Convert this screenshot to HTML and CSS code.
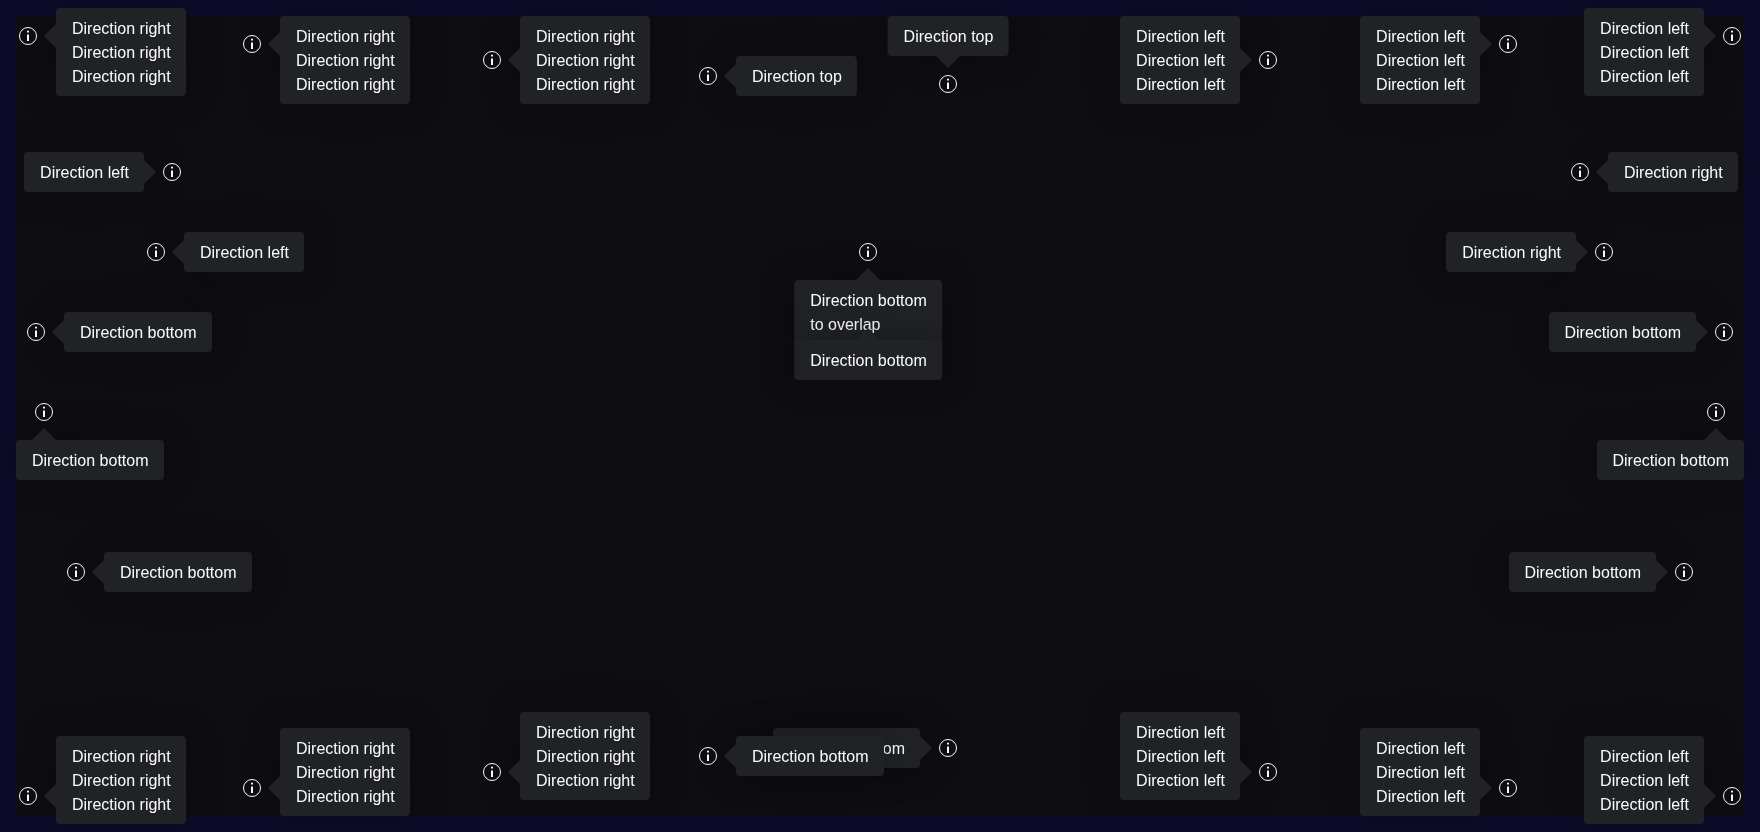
FILE: index.html
```
<!DOCTYPE html>
<html lang="en">
<head>
<meta charset="utf-8">
<title>Popover directions</title>
<link rel="stylesheet" href="styles.css">
</head>
<body>
<main class="frame" id="frame">
  <div class="stage"></div>
</main>
<script src="popovers.js"></script>
</body>
</html>
```
FILE: styles.css
```
* {
  box-sizing: border-box;
}

body {
  margin: 0;
  background: #0e0e12;
  color: #fbfcff;
  font: 16px/24px "Liberation Sans", Arial, sans-serif;
}

.frame {
  position: relative;
  display: flex;
  min-height: 100vh;
  padding: 16px;
  overflow: hidden;
  background: #0c0c2a;
}

.stage {
  flex: 1;
  background: #0e0e12;
}

/* A spot is one info button pinned on the free canvas */
.spot {
  position: absolute;
  width: 24px;
  height: 24px;
}

.info {
  display: block;
  width: 24px;
  height: 24px;
  padding: 0;
  border: 0;
  background: none;
  color: inherit;
  cursor: pointer;
}

.info svg {
  display: block;
}

.popover {
  position: absolute;
  inset: 0;
  z-index: 1;
  pointer-events: none;
  filter: drop-shadow(0 0 16px rgba(0, 0, 0, 0.3));
}

.popover::before {
  content: "";
  position: absolute;
  background: #212225;
}

.box {
  position: absolute;
  padding: 9px 15px 7px 16px;
  border-radius: 4px;
  background: #212225;
  white-space: pre;
}

.right::before {
  left: 28px;
  top: 0;
  width: 12px;
  height: 24px;
  clip-path: polygon(100% 0, 100% 100%, 0 50%);
}

.left::before {
  right: 28px;
  top: 0;
  width: 12px;
  height: 24px;
  clip-path: polygon(0 0, 100% 50%, 0 100%);
}

.top::before {
  bottom: 28px;
  left: 0;
  width: 24px;
  height: 12px;
  clip-path: polygon(0 0, 100% 0, 50% 100%);
}

.bottom::before {
  top: 28px;
  left: 0;
  width: 24px;
  height: 12px;
  clip-path: polygon(50% 0, 100% 100%, 0 100%);
}

.right .box {
  left: 40px;
}

.left .box {
  right: 40px;
}

.right .box,
.left .box {
  top: 50%;
  transform: translateY(-50%);
}

.top .box {
  bottom: 40px;
}

.bottom .box {
  top: 40px;
}

.top .box,
.bottom .box {
  left: 50%;
  transform: translateX(-50%);
}

/* Boxes pushed back inside the edge of the stage */
.popover.shift-down .box {
  top: -16px;
  transform: none;
}

.popover.shift-up .box {
  top: auto;
  bottom: -16px;
  transform: none;
}

.popover.shift-right .box {
  left: -16px;
  transform: none;
}

.popover.shift-left .box {
  left: auto;
  right: -16px;
  transform: none;
}
```
FILE: popovers.js
```
const three = (text) => [text, text, text].join("\n");

// [horizontal anchor, vertical anchor, popover classes, text]
const spots = [
  ["left:16px", "top:24px", "right shift-down", three("Direction right")],
  ["left:240px", "top:32px", "right shift-down", three("Direction right")],
  ["left:480px", "top:48px", "right", three("Direction right")],
  ["left:calc(50% - 184px)", "top:64px", "right", "Direction top"],
  ["left:calc(50% + 56px)", "top:72px", "top", "Direction top"],
  ["right:480px", "top:48px", "left", three("Direction left")],
  ["right:240px", "top:32px", "left shift-down", three("Direction left")],
  ["right:16px", "top:24px", "left shift-down", three("Direction left")],

  ["left:160px", "top:160px", "left", "Direction left"],
  ["left:144px", "top:240px", "right", "Direction left"],
  ["left:24px", "top:320px", "right", "Direction bottom"],
  ["left:32px", "top:400px", "bottom shift-right", "Direction bottom"],
  ["left:64px", "top:560px", "right", "Direction bottom"],

  ["left:calc(50% - 24px)", "top:240px", "bottom", "Direction bottom\nto overlap"],
  ["left:calc(50% - 24px)", "top:300px", "bottom", "Direction bottom"],

  ["right:168px", "top:160px", "right", "Direction right"],
  ["right:144px", "top:240px", "left", "Direction right"],
  ["right:24px", "top:320px", "left", "Direction bottom"],
  ["right:32px", "top:400px", "bottom shift-left", "Direction bottom"],
  ["right:64px", "top:560px", "left", "Direction bottom"],

  ["left:16px", "bottom:24px", "right shift-up", three("Direction right")],
  ["left:240px", "bottom:32px", "right shift-up", three("Direction right")],
  ["left:480px", "bottom:48px", "right shift-up", three("Direction right")],
  ["left:calc(50% + 56px)", "bottom:72px", "left", "Direction bottom"],
  ["left:calc(50% - 184px)", "bottom:64px", "right", "Direction bottom"],
  ["right:480px", "bottom:48px", "left shift-up", three("Direction left")],
  ["right:240px", "bottom:32px", "left shift-up", three("Direction left")],
  ["right:16px", "bottom:24px", "left shift-up", three("Direction left")]
];

const icon = `<svg width="24" height="24" viewBox="0 0 24 24" aria-hidden="true">
  <circle cx="12" cy="12" r="8.5" fill="none" stroke="currentColor"/>
  <path fill="currentColor" d="M11 6.8h2v1.8h-2zM11 10.6h2V17h-2z"/>
</svg>`;

document.getElementById("frame").insertAdjacentHTML(
  "beforeend",
  spots.map(([x, y, kind, text], i) => `<div class="spot" style="${x};${y}">
    <button class="info" type="button" aria-label="Info" aria-describedby="tip-${i}">${icon}</button>
    <div class="popover ${kind}"><div class="box" id="tip-${i}" role="tooltip">${text}</div></div>
  </div>`).join("")
);
```
